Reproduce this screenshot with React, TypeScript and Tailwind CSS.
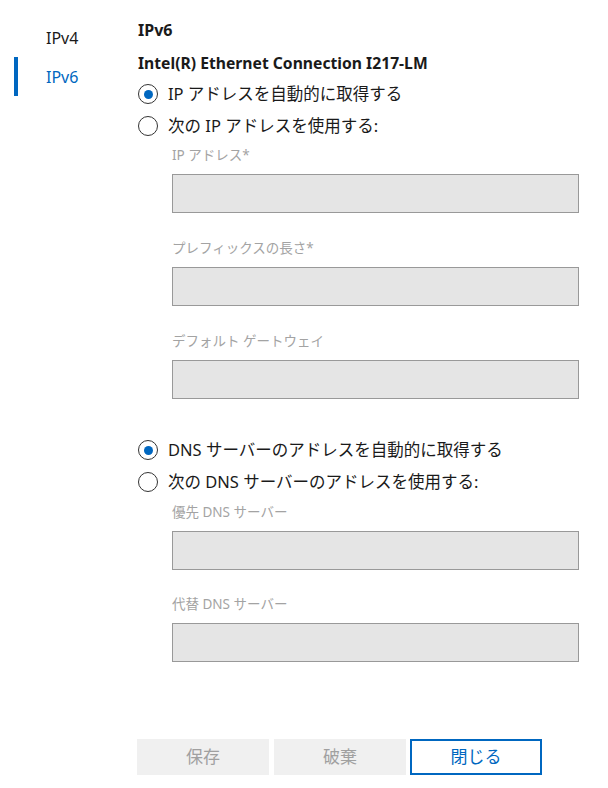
import { useState } from 'react'

const font = { fontFamily: '"Noto Sans", "Noto Sans CJK JP", sans-serif' }

function Radio({ checked, label, onSelect }: { checked: boolean; label: string; onSelect: () => void }) {
  return (
    <div className="flex h-[32px] items-center cursor-pointer" onClick={onSelect}>
      <span className="flex h-[20px] w-[20px] items-center justify-center rounded-full border-[1.5px] border-[#333]">
        {checked && <span className="h-[9px] w-[9px] rounded-full bg-[#0067c0]" />}
      </span>
      <span className="ml-[10px] text-[16.5px] leading-[20px] text-[#1a1a1a]">{label}</span>
    </div>
  )
}

function Field({ label, className = '' }: { label: string; className?: string }) {
  return (
    <div className={`ml-[34px] w-[407px] ${className}`}>
      <div className="h-[20px] text-[13.5px] leading-[20px] text-[#a3a3a3]">{label}</div>
      <div className="mt-[9px] h-[39px] border border-[#999] bg-[#e5e5e5]" />
    </div>
  )
}

export default function App() {
  const [tab, setTab] = useState('IPv6')
  const [ipAuto, setIpAuto] = useState(true)
  const [dnsAuto, setDnsAuto] = useState(true)

  return (
    <div className="flex h-[788px] w-[608px] bg-white text-[#1a1a1a]" style={font}>
      <nav className="w-[138px] shrink-0 pt-[18px]">
        {['IPv4', 'IPv6'].map((t) => (
          <div
            key={t}
            onClick={() => setTab(t)}
            className="relative flex h-[39px] cursor-pointer items-center pl-[46px] text-[16px]"
          >
            {tab === t && <span className="absolute left-[14px] top-0 h-[39px] w-[4px] bg-[#0067c0]" />}
            <span className={tab === t ? 'text-[#0067c0]' : 'text-[#1a1a1a]'}>{t}</span>
          </div>
        ))}
      </nav>

      <main className="flex-1">
        <div className="mt-[20px] h-[20px] text-[16px] font-bold leading-[20px]">{tab}</div>
        <div className="mt-[13px] h-[20px] text-[15.7px] font-bold leading-[20px]">Intel(R) Ethernet Connection I217-LM</div>

        <div className="mt-[5px]">
          <Radio checked={ipAuto} label="IP アドレスを自動的に取得する" onSelect={() => setIpAuto(true)} />
          <Radio checked={!ipAuto} label="次の IP アドレスを使用する:" onSelect={() => setIpAuto(false)} />
        </div>

        <Field label="IP アドレス*" className="mt-[3px]" />
        <Field label="プレフィックスの長さ*" className="mt-[25px]" />
        <Field label="デフォルト ゲートウェイ" className="mt-[25px]" />

        <div className="mt-[35px]">
          <Radio checked={dnsAuto} label="DNS サーバーのアドレスを自動的に取得する" onSelect={() => setDnsAuto(true)} />
          <Radio checked={!dnsAuto} label="次の DNS サーバーのアドレスを使用する:" onSelect={() => setDnsAuto(false)} />
        </div>

        <Field label="優先 DNS サーバー" className="mt-[4px]" />
        <Field label="代替 DNS サーバー" className="mt-[24px]" />

        <div className="-ml-[1px] mt-[77px] flex gap-[5px]">
          <button className="h-[36px] w-[132px] bg-[#f0f0f0] text-[17px] text-[#a0a0a0]">保存</button>
          <button className="h-[36px] w-[132px] bg-[#f0f0f0] text-[17px] text-[#a0a0a0]">破棄</button>
          <button className="-ml-[1px] h-[36px] w-[132px] border-2 border-[#0067c0] bg-white text-[17px] text-[#0067c0]">閉じる</button>
        </div>
      </main>
    </div>
  )
}
